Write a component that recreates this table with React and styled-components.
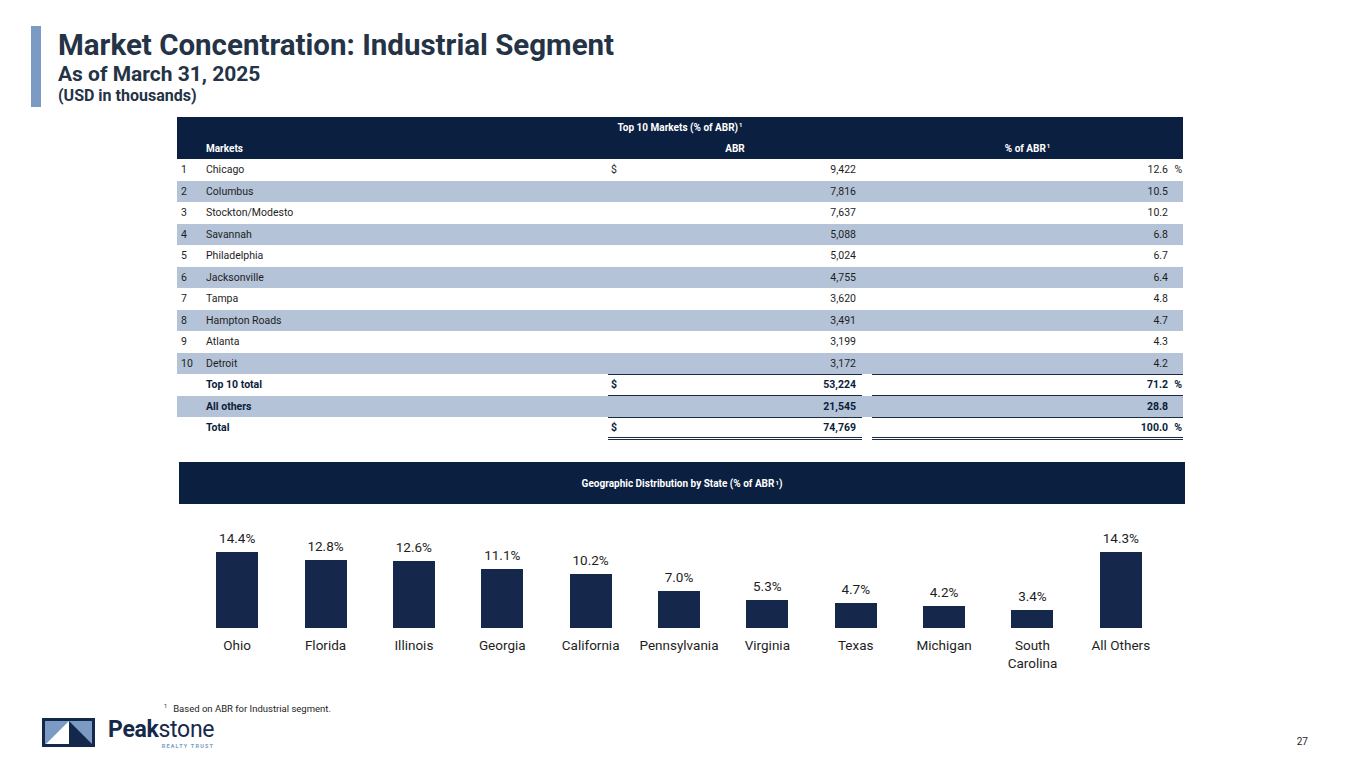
import React from 'react';
import styled, { createGlobalStyle } from 'styled-components';

const GlobalStyle = createGlobalStyle`
  html, body {
    margin: 0;
    padding: 0;
    background: #fff;
  }
  body {
    font-family: Roboto, "Liberation Sans", sans-serif;
    color: #1e1e1e;
  }
`;

const Page = styled.div`
  position: relative;
  width: 1365px;
  height: 768px;
  overflow: hidden;
  display: flex;
  flex-direction: column;
  background: #fff;
`;

const Header = styled.header`
  display: flex;
  align-items: flex-start;
  height: 81px;
  padding: 26px 0 0 31px;
`;

const Accent = styled.div`
  width: 10px;
  height: 81px;
  background: #7b9bc4;
`;

const TitleBlock = styled.div`
  margin: 3px 0 0 17px;
  color: #243346;
  font-weight: 700;
`;

const Title = styled.h1`
  margin: 0;
  font-size: 29.5px;
  line-height: 33px;
`;

const Subtitle = styled.h2`
  margin: 1px 0 0;
  font-size: 21px;
  line-height: 22px;
`;

const Units = styled.div`
  margin-top: 3px;
  font-size: 16px;
  line-height: 16px;
`;

const Table = styled.table`
  margin: 10px 0 0 177px;
  width: 1006px;
  border-collapse: collapse;
  table-layout: fixed;
  font-size: 10.5px;
`;

const HeadRow = styled.tr`
  background: #0b2040;
  color: #fff;
  height: 21px;
  font-weight: 700;
  font-size: 10px;
`;

const HeadCell = styled.th`
  padding: 0;
  font-weight: 700;
  text-align: ${p => p.$align || 'center'};
  vertical-align: middle;
`;

const Row = styled.tr`
  height: 21.5px;
  background: ${p => (p.$shade ? '#b4c3d7' : '#fff')};
  font-weight: ${p => (p.$bold ? 700 : 400)};
  color: ${p => (p.$bold ? '#0b1d3a' : '#1e1e1e')};
`;

const Cell = styled.td`
  padding: 0 ${p => p.$pr || 0}px 0 ${p => p.$pl || 0}px;
  text-align: ${p => p.$align || 'left'};
  white-space: nowrap;
  border-bottom: ${p =>
    p.$rule === 'double' ? '3px double #1b2b44' : p.$rule ? '1px solid #1b2b44' : 'none'};
`;

const Money = styled.div`
  display: flex;
  justify-content: space-between;
  padding: 0 6px 0 3px;
`;

const Sup = styled.sup`
  font-size: 0.6em;
  line-height: 0;
  vertical-align: 0.7em;
  margin-left: 1px;
`;

const ChartHead = styled.div`
  margin: 22px 0 0 179px;
  width: 1006px;
  height: 42px;
  background: #0b2040;
  color: #fff;
  font-size: 10px;
  font-weight: 700;
  display: flex;
  align-items: center;
  justify-content: center;
`;

const Chart = styled.div`
  margin: 20px 0 0 193px;
  width: 972px;
  display: grid;
  grid-template-columns: repeat(11, 1fr);
`;

const Column = styled.div`
  display: flex;
  flex-direction: column;
  align-items: center;
`;

const BarArea = styled.div`
  height: 104px;
  display: flex;
  flex-direction: column;
  justify-content: flex-end;
  align-items: center;
`;

const Value = styled.div`
  font-size: 13.5px;
  line-height: 15px;
  margin-bottom: 6px;
  color: #1e1e1e;
`;

const Bar = styled.div`
  width: 42px;
  background: #15284b;
`;

const Label = styled.div`
  margin-top: 8px;
  font-size: 13.5px;
  line-height: 18px;
  text-align: center;
  color: #1e1e1e;
`;

const Footnote = styled.div`
  margin: 31px 0 0 163px;
  font-size: 9.5px;
  line-height: 12px;
  color: #1e1e1e;
  & sup {
    margin-right: 6px;
  }
`;

const Footer = styled.footer`
  display: flex;
  align-items: flex-end;
  justify-content: space-between;
  padding: 3px 57px 0 42px;
`;

const Brand = styled.div`
  display: flex;
  align-items: flex-start;
  gap: 13px;
`;

const Wordmark = styled.div`
  display: flex;
  flex-direction: column;
  align-items: flex-end;
  color: #16294a;
`;

const Name = styled.div`
  font-size: 23px;
  line-height: 24px;
  letter-spacing: -0.3px;
  & b {
    font-weight: 700;
  }
`;

const Tagline = styled.div`
  font-size: 5.5px;
  letter-spacing: 1.2px;
  color: #7b9bc4;
  font-weight: 700;
  margin-top: 1px;
`;

const PageNum = styled.div`
  font-size: 10px;
  margin-bottom: 2px;
`;

const markets = [
  ['Chicago', '9,422', '12.6', true],
  ['Columbus', '7,816', '10.5'],
  ['Stockton/Modesto', '7,637', '10.2'],
  ['Savannah', '5,088', '6.8'],
  ['Philadelphia', '5,024', '6.7'],
  ['Jacksonville', '4,755', '6.4'],
  ['Tampa', '3,620', '4.8'],
  ['Hampton Roads', '3,491', '4.7'],
  ['Atlanta', '3,199', '4.3'],
  ['Detroit', '3,172', '4.2'],
];

const totals = [
  { name: 'Top 10 total', abr: '53,224', pct: '71.2', sign: true, rule: true },
  { name: 'All others', abr: '21,545', pct: '28.8', shade: true, rule: true },
  { name: 'Total', abr: '74,769', pct: '100.0', sign: true, rule: 'double' },
];

const states = [
  ['Ohio', 14.4],
  ['Florida', 12.8],
  ['Illinois', 12.6],
  ['Georgia', 11.1],
  ['California', 10.2],
  ['Pennsylvania', 7.0],
  ['Virginia', 5.3],
  ['Texas', 4.7],
  ['Michigan', 4.2],
  ['South\nCarolina', 3.4],
  ['All Others', 14.3],
];

const Logo = () => (
  <svg width="53" height="29" viewBox="0 0 53 29">
    <rect x="0" y="0" width="53" height="29" fill="#14284b" />
    <rect x="3" y="3" width="47" height="23" fill="#7b9bc4" />
    <polygon points="4,26 27,3 27,26" fill="#fff" />
    <polygon points="27,3 50,26 27,26" fill="#14284b" />
  </svg>
);

export default function App() {
  return (
    <Page>
      <GlobalStyle />
      <Header>
        <Accent />
        <TitleBlock>
          <Title>Market Concentration: Industrial Segment</Title>
          <Subtitle>As of March 31, 2025</Subtitle>
          <Units>(USD in thousands)</Units>
        </TitleBlock>
      </Header>

      <Table>
        <colgroup>
          <col style={{ width: 29 }} />
          <col style={{ width: 402 }} />
          <col style={{ width: 254 }} />
          <col style={{ width: 10 }} />
          <col style={{ width: 296 }} />
          <col style={{ width: 15 }} />
        </colgroup>
        <thead>
          <HeadRow>
            <HeadCell colSpan={6}>
              Top 10 Markets (% of ABR)<Sup>1</Sup>
            </HeadCell>
          </HeadRow>
          <HeadRow>
            <HeadCell />
            <HeadCell $align="left">Markets</HeadCell>
            <HeadCell>ABR</HeadCell>
            <HeadCell />
            <HeadCell colSpan={2}>
              % of ABR<Sup>1</Sup>
            </HeadCell>
          </HeadRow>
        </thead>
        <tbody>
          {markets.map(([name, abr, pct, first], i) => {
            const last = i === markets.length - 1;
            return (
              <Row key={name} $shade={i % 2 === 1}>
                <Cell $pl={4}>{i + 1}</Cell>
                <Cell>{name}</Cell>
                <Cell $rule={last}>
                  <Money>
                    <span>{first ? '$' : ''}</span>
                    <span>{abr}</span>
                  </Money>
                </Cell>
                <Cell />
                <Cell $align="right" $rule={last}>{pct}</Cell>
                <Cell $align="right" $pr={1} $rule={last}>{first ? '%' : ''}</Cell>
              </Row>
            );
          })}
          {totals.map(t => (
            <Row key={t.name} $shade={t.shade} $bold>
              <Cell />
              <Cell>{t.name}</Cell>
              <Cell $rule={t.rule}>
                <Money>
                  <span>{t.sign ? '$' : ''}</span>
                  <span>{t.abr}</span>
                </Money>
              </Cell>
              <Cell />
              <Cell $align="right" $rule={t.rule}>{t.pct}</Cell>
              <Cell $align="right" $pr={1} $rule={t.rule}>{t.sign ? '%' : ''}</Cell>
            </Row>
          ))}
        </tbody>
      </Table>

      <ChartHead>
        Geographic Distribution by State (% of ABR<Sup>1</Sup>)
      </ChartHead>

      <Chart>
        {states.map(([name, v]) => (
          <Column key={name}>
            <BarArea>
              <Value>{v.toFixed(1)}%</Value>
              <Bar style={{ height: Math.round(v * 5.28) }} />
            </BarArea>
            <Label>
              {name.split('\n').map(line => (
                <div key={line}>{line}</div>
              ))}
            </Label>
          </Column>
        ))}
      </Chart>

      <Footnote>
        <Sup>1</Sup>Based on ABR for Industrial segment.
      </Footnote>

      <Footer>
        <Brand>
          <Logo />
          <Wordmark>
            <Name>
              <b>Peak</b>stone
            </Name>
            <Tagline>REALTY TRUST</Tagline>
          </Wordmark>
        </Brand>
        <PageNum>27</PageNum>
      </Footer>
    </Page>
  );
}
